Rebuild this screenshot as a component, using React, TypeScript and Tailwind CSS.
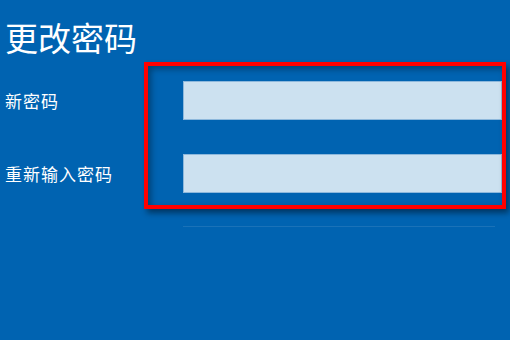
import React from 'react';

const Field = ({ label }: { label: string }) => (
    <>
        <div className="flex items-center text-[17px] tracking-[1px] text-white">{label}</div>
        <input
            type="password"
            aria-label={label}
            className="h-[39px] w-[319px] bg-[#cce1f0] border border-[#8db8dc] outline-none"
        />
    </>
);

export default function App() {
    return (
        <div className="relative w-[510px] h-[340px] overflow-hidden bg-[#0063b1] font-['Noto_Sans_CJK_SC','Noto_Sans',sans-serif]">
            <div className="flex flex-col pl-[5px]">
                <h1 className="pt-[17px] text-[33px] leading-[40px] font-normal text-white">更改密码</h1>

                <div className="mt-[24px] grid grid-cols-[178px_319px] gap-y-[34px]">
                    <Field label="新密码" />
                    <Field label="重新输入密码" />
                </div>

                <div className="ml-[178px] mt-[33px] h-px w-[312px] bg-[#1a72b8]" />
            </div>

            {/* red annotation frame */}
            <div className="absolute left-[144px] top-[62px] w-[362px] h-[147px] border-4 border-[#ff0000] shadow-[3px_4px_6px_rgba(0,0,0,0.45),inset_3px_3px_6px_rgba(0,0,0,0.35)] pointer-events-none" />
        </div>
    );
}
